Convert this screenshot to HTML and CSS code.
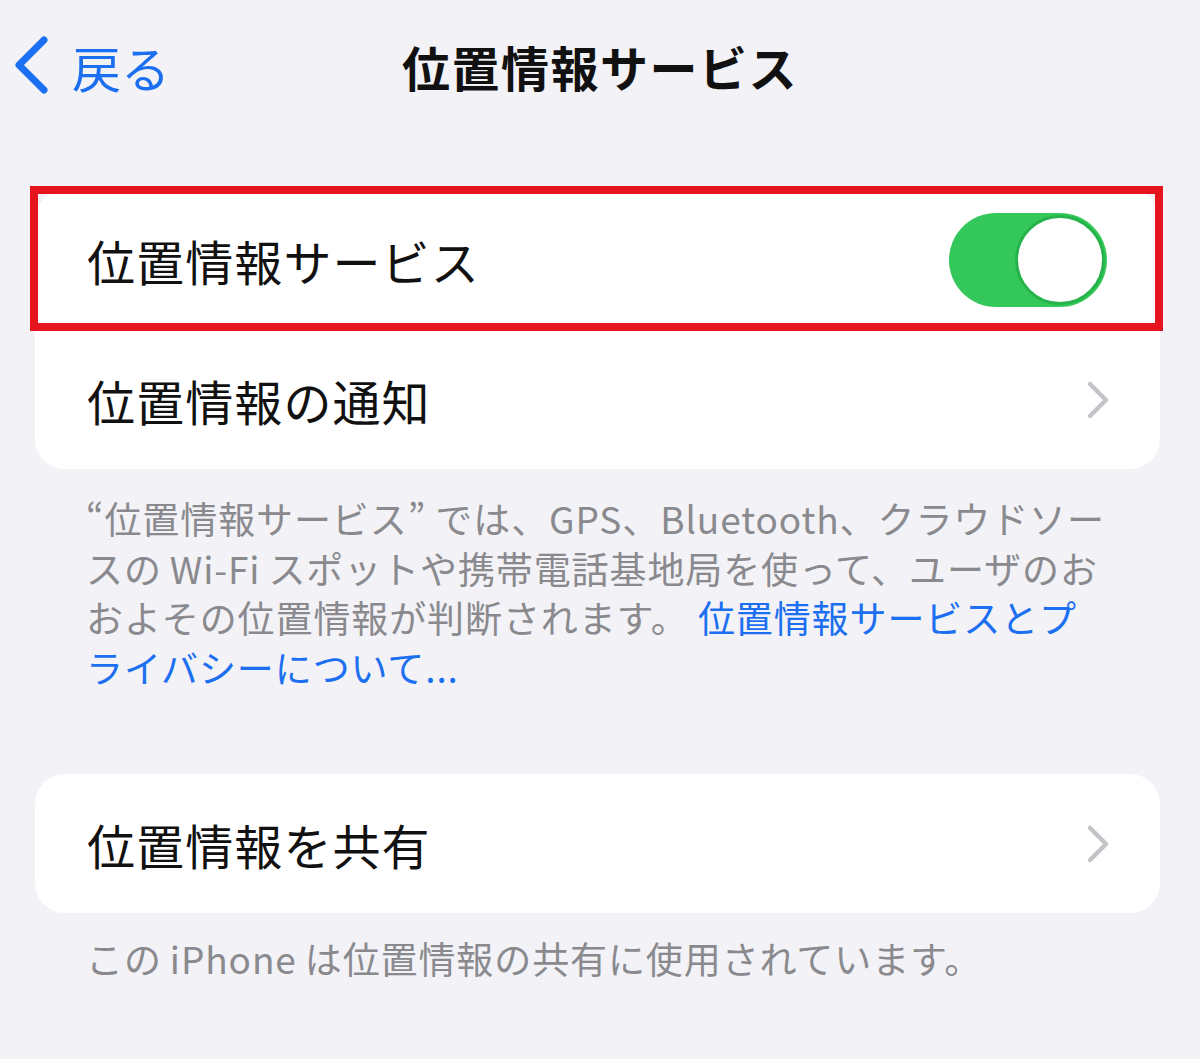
FILE: index.html
```html
<!DOCTYPE html>
<html lang="ja">
<head>
<meta charset="utf-8">
<title>位置情報サービス</title>
<link rel="stylesheet" href="styles.css">
</head>
<body>
<div class="screen">
  <header class="nav">
    <div class="back">
      <svg class="back-chev" width="40" height="60" viewBox="0 0 40 60"><path d="M32 4 L7 29 L32 54" fill="none" stroke="#1b6ff0" stroke-width="7" stroke-linecap="round" stroke-linejoin="round"/></svg>
      <span class="back-label">戻る</span>
    </div>
    <h1 class="title">位置情報サービス</h1>
    <div class="spacer"></div>
  </header>

  <section class="card card-first">
    <div class="row row-toggle">
      <span class="row-label">位置情報サービス</span>
      <span class="toggle"><span class="knob"></span></span>
      <span class="highlight"></span>
    </div>
    <div class="row">
      <span class="row-label">位置情報の通知</span>
      <svg class="chev" width="26" height="40" viewBox="0 0 26 40"><path d="M5 4 L21 20 L5 36" fill="none" stroke="#c4c4c8" stroke-width="4.5" stroke-linecap="round" stroke-linejoin="round"/></svg>
    </div>
  </section>
  <p class="footer footer-first">“位置情報サービス” では、GPS、Bluetooth、クラウドソー<br>スの<span class="gap"></span>Wi-Fi<span class="gap"></span>スポットや携帯電話基地局を使って、ユーザのお<br>およその位置情報が判断されます。 <span class="link">位置情報サービスとプ<br>ライバシーについて...</span></p>

  <section class="card card-second">
    <div class="row">
      <span class="row-label">位置情報を共有</span>
      <svg class="chev" width="26" height="40" viewBox="0 0 26 40"><path d="M5 4 L21 20 L5 36" fill="none" stroke="#c4c4c8" stroke-width="4.5" stroke-linecap="round" stroke-linejoin="round"/></svg>
    </div>
  </section>
  <p class="footer footer-second">この<span class="gap"></span>iPhone<span class="gap"></span>は位置情報の共有に使用されています。</p>
</div>
</body>
</html>
```

FILE: styles.css
```css
* { box-sizing: border-box; }
html, body {
  margin: 0;
  padding: 0;
  background: #f2f2f7;
}
body {
  font-family: "Noto Sans CJK JP", "Noto Sans", sans-serif;
  color: #111;
}
.screen {
  width: 1200px;
  height: 1059px;
  overflow: hidden;
}
.nav {
  display: grid;
  grid-template-columns: 1fr auto 1fr;
  align-items: center;
  height: 132px;
  padding: 0 0 0 12px;
}
.back {
  display: flex;
  align-items: center;
  gap: 20px;
  color: #1b6ff0;
}
.back-chev { display: block; }
.back-label {
  font-size: 49px;
  line-height: 1;
  letter-spacing: 0;
}
.title {
  margin: 0;
  font-size: 48px;
  font-weight: 700;
  line-height: 1;
  color: #111;
  letter-spacing: 1.5px;
  transform: translateX(-6px);
}
.card {
  background: #fff;
  border-radius: 30px;
  margin-left: 35px;
  width: 1125px;
}
.card-first { margin-top: 58px; }
.row {
  position: relative;
  display: flex;
  align-items: center;
  justify-content: space-between;
  height: 139px;
  padding: 0 53px 0 52px;
}
.row-toggle { height: 140px; }
.row-label {
  font-size: 48px;
  line-height: 1;
  color: #111;
  letter-spacing: 1.1px;
}
.chev { display: block; margin-right: -4px; }
.toggle {
  position: relative;
  width: 158px;
  height: 94px;
  border-radius: 47px;
  background: #34c759;
  display: flex;
  align-items: center;
  justify-content: flex-end;
  padding-right: 2px;
}
.knob {
  width: 90px;
  height: 90px;
  border-radius: 50%;
  background: #fff;
  border: 3.5px solid #27b34c;
}
.highlight {
  position: absolute;
  left: -5px;
  top: -4px;
  right: -3px;
  height: 145px;
  border: 8px solid #e5141e;
  pointer-events: none;
}
.footer {
  margin: 0;
  padding-left: 86px;
  font-size: 37px;
  line-height: 49.5px;
  color: #8a8a8e;
  letter-spacing: 0.9px;
}
.gap { display: inline-block; width: 8px; }
.footer-first { padding-top: 25px; }
.link { color: #1b6ff0; }
.card-second { margin-top: 82px; }
.footer-second { padding-top: 21px; }
```
